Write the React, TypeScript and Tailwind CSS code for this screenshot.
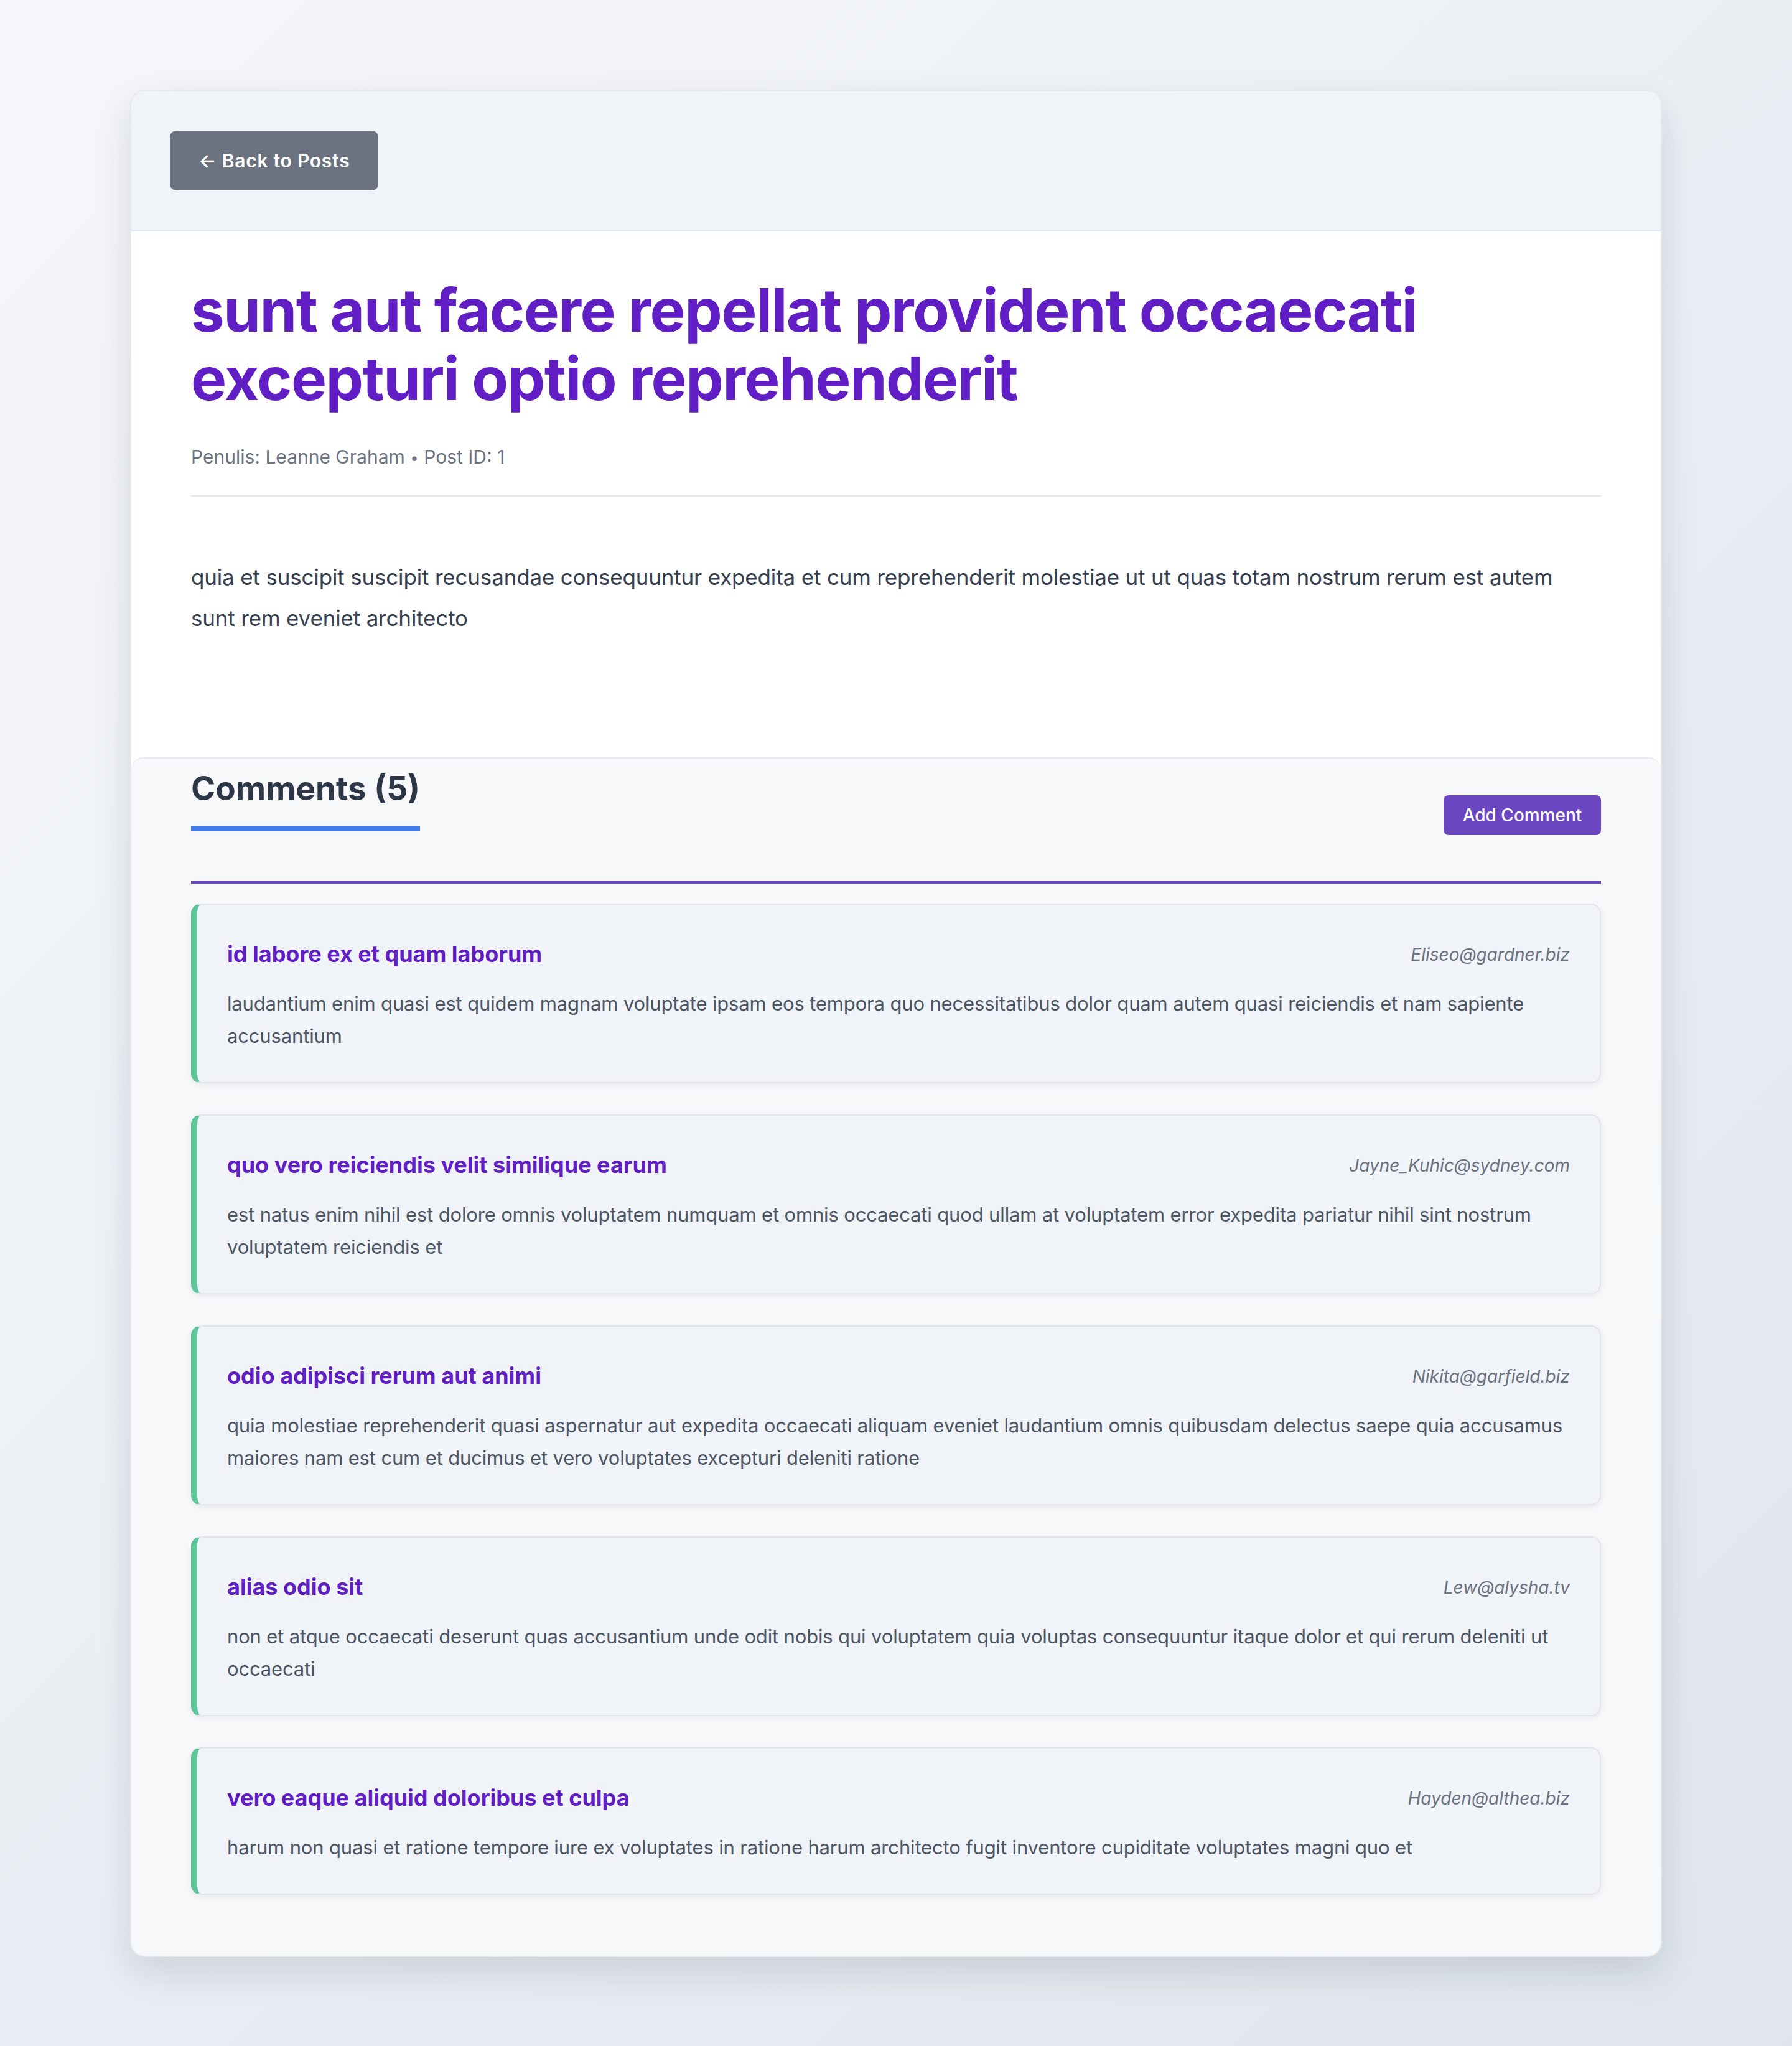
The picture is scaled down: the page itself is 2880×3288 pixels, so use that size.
const comments = [
  {
    name: 'id labore ex et quam laborum',
    email: 'Eliseo@gardner.biz',
    body: 'laudantium enim quasi est quidem magnam voluptate ipsam eos tempora quo necessitatibus dolor quam autem quasi reiciendis et nam sapiente accusantium',
  },
  {
    name: 'quo vero reiciendis velit similique earum',
    email: 'Jayne_Kuhic@sydney.com',
    body: 'est natus enim nihil est dolore omnis voluptatem numquam et omnis occaecati quod ullam at voluptatem error expedita pariatur nihil sint nostrum voluptatem reiciendis et',
  },
  {
    name: 'odio adipisci rerum aut animi',
    email: 'Nikita@garfield.biz',
    body: 'quia molestiae reprehenderit quasi aspernatur aut expedita occaecati aliquam eveniet laudantium omnis quibusdam delectus saepe quia accusamus maiores nam est cum et ducimus et vero voluptates excepturi deleniti ratione',
  },
  {
    name: 'alias odio sit',
    email: 'Lew@alysha.tv',
    body: 'non et atque occaecati deserunt quas accusantium unde odit nobis qui voluptatem quia voluptas consequuntur itaque dolor et qui rerum deleniti ut occaecati',
  },
  {
    name: 'vero eaque aliquid doloribus et culpa',
    email: 'Hayden@althea.biz',
    body: 'harum non quasi et ratione tempore iure ex voluptates in ratione harum architecto fugit inventore cupiditate voluptates magni quo et',
  },
]

export default function App() {
  return (
    <div className="min-h-screen w-full bg-[linear-gradient(135deg,#f5f7fa_0%,#e0e5ed_100%)] pt-[145px] pb-[144px] font-['Inter',sans-serif]">
      <div className="mx-auto w-[2462px] rounded-[24px] border-2 border-[#e6e9ee] bg-white shadow-[0_24px_60px_rgba(15,23,42,0.13)] overflow-hidden">
        {/* header */}
        <div className="bg-[#f0f3f8] px-[62px] pt-[63px] pb-[64px] border-b-2 border-[#e3e7ed]">
          <button className="h-[96px] px-[46px] rounded-[10px] bg-[#6b7280] text-white text-[30px] font-semibold tracking-[0.025em]">
            ← Back to Posts
          </button>
        </div>

        {/* post */}
        <div className="px-[96px] pt-[71px] pb-[191px]">
          <h1 className="text-[96px] leading-[110px] font-bold tracking-[-0.016em] text-[#601ec4]">
            sunt aut facere repellat provident occaecati excepturi optio reprehenderit
          </h1>
          <div className="mt-[49px] h-[86px] pb-[40px] border-b-2 border-[#e5e7eb] text-[30px] leading-[44px] text-[#6b7280]">
            Penulis: Leanne Graham <span className="text-[24px] leading-none align-[1px]">•</span> Post ID: 1
          </div>
          <p className="mt-[96px] text-[35px] leading-[66px] tracking-[-0.005em] text-[#374151]">
            quia et suscipit suscipit recusandae consequuntur expedita et cum reprehenderit molestiae ut ut quas totam nostrum rerum est autem sunt rem eveniet architecto
          </p>
        </div>

        {/* comments */}
        <div className="rounded-t-[20px] border-t-2 border-[#e8ebf0] bg-[#f7f8fa] px-[96px] pt-[16px] pb-[98px]">
          <div className="flex items-center justify-between pb-[32px] border-b-4 border-[#6b46c1]">
            <h2 className="mb-[48px] inline-block border-b-[8px] border-[#3f7aee] pb-[29px] text-[53px] leading-[64px] font-bold text-[#2d3748]">
              Comments (5)
            </h2>
            <button className="h-[64px] w-[253px] rounded-[8px] bg-[#6b46c1] text-[28px] font-medium text-white">
              Add Comment
            </button>
          </div>

          <div className="mt-[32px] flex flex-col gap-[50px]">
            {comments.map((c) => (
              <div
                key={c.email}
                className="rounded-[16px] border-2 border-l-[10px] border-[#e2e5ea] border-l-[#5ec59a] bg-[#f0f3f8] px-[48px] py-[48px] shadow-[0_3px_8px_rgba(15,23,42,0.07)]"
              >
                <div className="flex items-center justify-between">
                  <h3 className="text-[36px] leading-[63px] font-bold text-[#601ec4]">{c.name}</h3>
                  <span className="text-[28px] italic text-[#6b7280]">{c.email}</span>
                </div>
                <p className="mt-[22px] text-[31px] leading-[52px] tracking-[-0.005em] text-[#4b5563]">{c.body}</p>
              </div>
            ))}
          </div>
        </div>
      </div>
    </div>
  )
}
